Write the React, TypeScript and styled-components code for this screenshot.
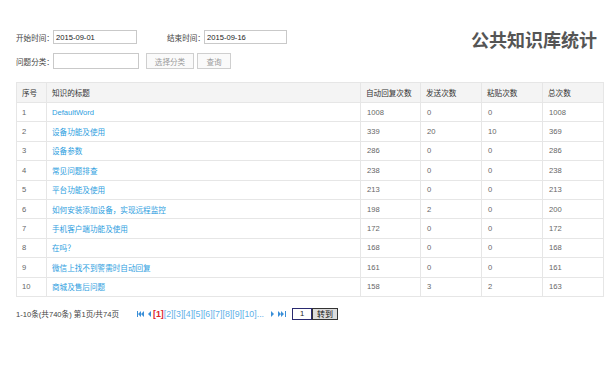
import React from "react";
import styled, { createGlobalStyle } from "styled-components";

const Global = createGlobalStyle`
  html, body { margin: 0; padding: 0; background: #fff; }
  body { font-family: "Liberation Sans", "Noto Sans CJK SC", sans-serif; font-size: 7.6px; color: #555; }
`;

const Page = styled.div`
  width: 612px;
  height: 374px;
  padding: 30px 9px 0 16px;
  box-sizing: border-box;
`;

const Top = styled.div`
  display: flex;
  justify-content: space-between;
  align-items: flex-start;
  height: 52px;
`;

const Filters = styled.div`
  display: flex;
  flex-direction: column;
  gap: 9px;
`;

const FilterRow = styled.div`
  display: flex;
  align-items: center;
`;

const Field = styled.div<{ $gap?: number }>`
  display: flex;
  align-items: center;
  margin-left: ${(p) => p.$gap ?? 0}px;
`;

const Label = styled.span`
  color: #444;
  white-space: nowrap;
  width: 37px;
`;

const TextInput = styled.div<{ $w: number; $h: number }>`
  width: ${(p) => p.$w}px;
  height: ${(p) => p.$h}px;
  box-sizing: border-box;
  border: 1px solid #c9c9c9;
  color: #222;
  display: flex;
  align-items: center;
  padding-left: 2px;
  font-size: 7.6px;
`;

const Button = styled.div<{ $w: number; $ml: number }>`
  width: ${(p) => p.$w}px;
  height: 16px;
  margin-left: ${(p) => p.$ml}px;
  box-sizing: border-box;
  border: 1px solid #cfcfcf;
  background: #fafafa;
  color: #9a9a9a;
  display: flex;
  align-items: center;
  justify-content: center;
`;

const Title = styled.h1`
  margin: -2px 0 0 0;
  font-size: 18px;
  font-weight: bold;
  color: #555;
  font-family: "Noto Sans CJK SC", sans-serif;
  line-height: 22px;
  padding-right: 6px;
`;

const Table = styled.table`
  border-collapse: collapse;
  width: 587px;
  table-layout: fixed;
  border: 1px solid #e6e6e6;
`;

const Col = styled.col<{ $w: number }>`
  width: ${(p) => p.$w}px;
`;

const Th = styled.th`
  height: 19px;
  background: #f4f4f4;
  color: #333;
  font-weight: normal;
  text-align: left;
  padding: 0 0 0 5px;
  border-right: 1px solid #e6e6e6;
  white-space: nowrap;
  overflow: hidden;
`;

const Td = styled.td<{ $link?: boolean; $pl?: number }>`
  height: 18.4px;
  padding: 0 0 0 ${(p) => p.$pl ?? 5}px;
  border-top: 1px solid #e6e6e6;
  border-right: 1px solid #e6e6e6;
  color: ${(p) => (p.$link ? "#2d9ee0" : "#666")};
  white-space: nowrap;
  overflow: hidden;
`;

const Pager = styled.div`
  display: flex;
  align-items: center;
  margin-top: 11px;
  height: 12px;
`;

const Summary = styled.span`
  color: #444;
  width: 121px;
`;

const PageLinks = styled.div`
  display: flex;
  align-items: center;
  color: #5db0e8;
  font-size: 8.8px;
`;

const Arrow = styled.svg<{ $ml?: number; $mr?: number }>`
  display: block;
  margin-left: ${(p) => p.$ml ?? 0}px;
  margin-right: ${(p) => p.$mr ?? 0}px;
`;

const Current = styled.span`
  color: #e0262b;
  font-weight: bold;
  font-size: 8.8px;
`;

const GoInput = styled.div`
  width: 20px;
  height: 12px;
  margin-left: 5px;
  box-sizing: border-box;
  border: 1px solid #2a2a70;
  color: #222;
  display: flex;
  align-items: center;
  justify-content: center;
  font-size: 7.6px;
`;

const GoButton = styled.div`
  width: 26px;
  height: 12px;
  box-sizing: border-box;
  border: 1px solid #333;
  background: #dcdcdc;
  color: #111;
  display: flex;
  align-items: center;
  justify-content: center;
  font-size: 8px;
`;

const rows: [string, number, number, number, number][] = [
  ["DefaultWord", 1008, 0, 0, 1008],
  ["设备功能及使用", 339, 20, 10, 369],
  ["设备参数", 286, 0, 0, 286],
  ["常见问题排查", 238, 0, 0, 238],
  ["平台功能及使用", 213, 0, 0, 213],
  ["如何安装添加设备，实现远程监控", 198, 2, 0, 200],
  ["手机客户端功能及使用", 172, 0, 0, 172],
  ["在吗？", 168, 0, 0, 168],
  ["微信上找不到警需时自动回复", 161, 0, 0, 161],
  ["商城及售后问题", 158, 3, 2, 163],
];

const First = () => (
  <Arrow width="8" height="6" viewBox="0 0 8 6" $mr={3}>
    <rect x="0" y="0" width="1" height="6" fill="#3a8fd8" />
    <path d="M4 0 L1 3 L4 6 Z M7 0 L4 3 L7 6 Z" fill="#3a8fd8" />
  </Arrow>
);
const Prev = () => (
  <Arrow width="3" height="6" viewBox="0 0 3 6" $mr={2}>
    <path d="M3 0 L0 3 L3 6 Z" fill="#3a8fd8" />
  </Arrow>
);
const Next = () => (
  <Arrow width="3" height="6" viewBox="0 0 3 6" $ml={7} $mr={4}>
    <path d="M0 0 L3 3 L0 6 Z" fill="#3a8fd8" />
  </Arrow>
);
const Last = () => (
  <Arrow width="8" height="6" viewBox="0 0 8 6" $mr={1}>
    <path d="M0 0 L3 3 L0 6 Z M3 0 L6 3 L3 6 Z" fill="#3a8fd8" />
    <rect x="7" y="0" width="1" height="6" fill="#3a8fd8" />
  </Arrow>
);

export default function App() {
  return (
    <Page>
      <Global />
      <Top>
        <Filters>
          <FilterRow>
            <Field>
              <Label>开始时间：</Label>
              <TextInput $w={84} $h={14}>2015-09-01</TextInput>
            </Field>
            <Field $gap={30}>
              <Label>结束时间：</Label>
              <TextInput $w={83} $h={14}>2015-09-16</TextInput>
            </Field>
          </FilterRow>
          <FilterRow>
            <Field>
              <Label>问题分类：</Label>
              <TextInput $w={86} $h={16} />
            </Field>
            <Button $w={48} $ml={7}>选择分类</Button>
            <Button $w={34} $ml={3}>查询</Button>
          </FilterRow>
        </Filters>
        <Title>公共知识库统计</Title>
      </Top>
      <Table>
        <colgroup>
          <Col $w={30} />
          <Col $w={314} />
          <Col $w={60} />
          <Col $w={61} />
          <Col $w={61} />
          <Col $w={61} />
        </colgroup>
        <thead>
          <tr>
            <Th>序号</Th>
            <Th>知识的标题</Th>
            <Th>自动回复次数</Th>
            <Th>发送次数</Th>
            <Th>粘贴次数</Th>
            <Th>总次数</Th>
          </tr>
        </thead>
        <tbody>
          {rows.map((r, i) => (
            <tr key={i}>
              <Td>{i + 1}</Td>
              <Td $link>{r[0]}</Td>
              <Td $pl={6}>{r[1]}</Td>
              <Td $pl={6}>{r[2]}</Td>
              <Td $pl={6}>{r[3]}</Td>
              <Td $pl={6}>{r[4]}</Td>
            </tr>
          ))}
        </tbody>
      </Table>
      <Pager>
        <Summary>1-10条(共740条) 第1页/共74页</Summary>
        <PageLinks>
          <First />
          <Prev />
          <Current>[1]</Current>
          <span>[2][3][4][5][6][7][8][9][10]...</span>
          <Next />
          <Last />
        </PageLinks>
        <GoInput>1</GoInput>
        <GoButton>转到</GoButton>
      </Pager>
    </Page>
  );
}
